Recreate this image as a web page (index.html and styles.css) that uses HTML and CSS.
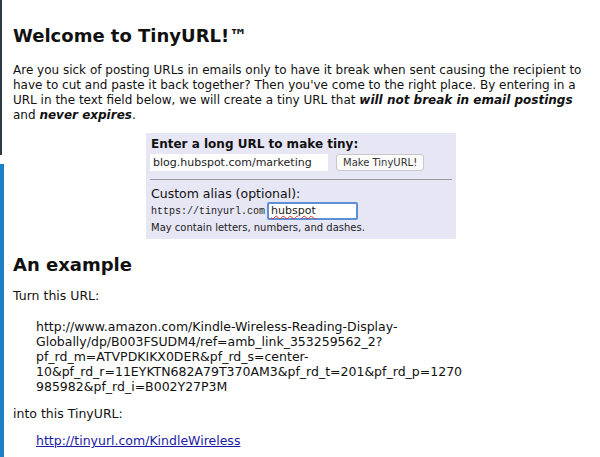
FILE: index.html
```html
<!DOCTYPE html>
<html>
<head>
<meta charset="utf-8">
<link rel="stylesheet" href="styles.css">
</head>
<body>
<div class="edge"><div class="edge-dark"></div><div class="edge-blue"></div></div>
<div class="page">
  <h1 class="title">Welcome to TinyURL!™</h1>
  <p class="intro">Are you sick of posting URLs in emails only to have it break when sent causing the recipient to<br>have to cut and paste it back together? Then you've come to the right place. By entering in a<br>URL in the text field below, we will create a tiny URL that <b><i>will not break in email postings</i></b><br>and <b><i>never expires</i></b>.</p>
  <div class="form-wrap">
    <form class="box">
      <div class="label-bold">Enter a long URL to make tiny:</div>
      <div class="row">
        <input class="url-input" type="text" value="blog.hubspot.com/marketing">
        <span class="btn">Make TinyURL!</span>
      </div>
      <div class="divider"></div>
      <div class="label">Custom alias (optional):</div>
      <div class="row alias-row">
        <span class="mono">https://tinyurl.com</span>
        <span class="alias-input"><span class="squiggle">hubspot</span></span>
      </div>
      <div class="hint">May contain letters, numbers, and dashes.</div>
    </form>
  </div>
  <h2 class="title2">An example</h2>
  <p class="small lead">Turn this URL:</p>
  <p class="small indent">http://www.amazon.com/Kindle-Wireless-Reading-Display-<br>Globally/dp/B003FSUDM4/ref=amb_link_353259562_2?<br>pf_rd_m=ATVPDKIKX0DER&amp;pf_rd_s=center-<br>10&amp;pf_rd_r=11EYKTN682A79T370AM3&amp;pf_rd_t=201&amp;pf_rd_p=1270<br>985982&amp;pf_rd_i=B002Y27P3M</p>
  <p class="small">into this TinyURL:</p>
  <p class="small indent"><a class="link" href="#">http://tinyurl.com/KindleWireless</a></p>
</div>
</body>
</html>
```
FILE: styles.css
```css
html, body { margin: 0; padding: 0; background: #fff; }
body { font-family: "DejaVu Sans", Verdana, sans-serif; color: #111; width: 600px; height: 457px; overflow: hidden; position: relative; }
.edge { position: absolute; left: 0; top: 0; bottom: 0; width: 4px; }
.edge-dark { position: absolute; left: 0; top: 0; height: 155px; width: 2px; background: #2b3a44; }
.edge-blue { position: absolute; left: 0; top: 164px; bottom: 0; width: 4px; background: #1d7fc4; }
.page { padding: 24px 0 0 13px; }
.title { font-size: 18px; font-weight: bold; margin: 0 0 15px 0; line-height: 24px; }
.intro { font-size: 12px; line-height: 15px; margin: 0 0 10px 0; width: 587px; white-space: nowrap; }
.form-wrap { display: flex; padding-left: 133px; }
.box { background: #e7e6f5; width: 302px; padding: 4px 4px 5px 4px; }
.label-bold { font-weight: bold; font-size: 12px; line-height: 15px; padding-left: 1px; }
.row { display: flex; align-items: center; gap: 8px; margin-top: 2px; }
.url-input { width: 178px; height: 17px; box-sizing: border-box; border: none; background: #fff; font-family: "DejaVu Sans", sans-serif; font-size: 11px; padding: 0 3px; color: #222; }
.btn { font-size: 10px; color: #333; background: #fbfbfb; border: 1px solid #c8c8c8; border-radius: 3px; padding: 1px 6px; line-height: 13px; }
.divider { height: 1px; background: #999; margin: 8px 0 6px 0; }
.label { font-size: 12.5px; line-height: 15px; padding-left: 1px; }
.alias-row { gap: 2px; margin-top: 1px; }
.mono { font-family: "Liberation Mono", monospace; font-size: 10px; color: #222; padding-left: 1px; }
.alias-input { width: 91px; height: 18px; box-sizing: border-box; border: 2px solid #5b8fd6; border-radius: 2px; background: #fff; font-size: 11px; line-height: 14px; padding-left: 2px; color: #222; }
.squiggle { text-decoration: underline wavy #d33; text-decoration-thickness: 1px; }
.hint { font-size: 10px; line-height: 13px; margin-top: 1px; padding-left: 1px; color: #222; }
.title2 { font-size: 18px; font-weight: bold; margin: 14px 0 11px 0; line-height: 24px; }
.small { font-size: 12.5px; line-height: 15px; margin: 0 0 12px 0; }
.small.lead { margin-bottom: 16px; }
.indent { padding-left: 23px; }
.link { color: #1a1aa6; }
```
